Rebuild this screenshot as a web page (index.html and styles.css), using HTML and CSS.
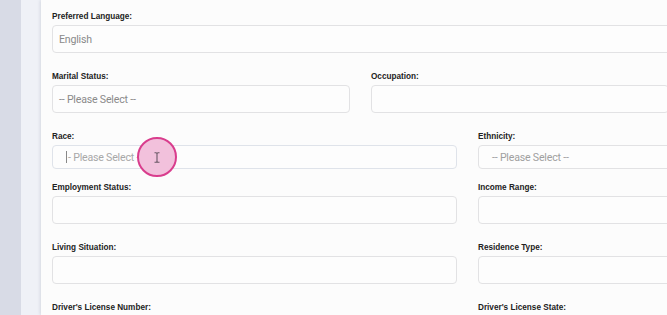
FILE: index.html
```html
<!DOCTYPE html>
<html>
<head>
<meta charset="utf-8">
<link rel="stylesheet" href="styles.css">
</head>
<body>
<div class="rail-dark"></div>
<div class="rail-light"></div>
<main class="card">
  <div class="row row-one">
    <div class="field">
      <label class="label">Preferred Language:</label>
      <div class="input">English</div>
    </div>
  </div>
  <div class="row row-half">
    <div class="field">
      <label class="label">Marital Status:</label>
      <div class="input">-- Please Select --</div>
    </div>
    <div class="field">
      <label class="label">Occupation:</label>
      <div class="input"></div>
    </div>
  </div>
  <div class="row row-wide row-short">
    <div class="field">
      <label class="label">Race:</label>
      <div class="input input-short input-focus"><span class="caret"></span>- Please Select -</div>
    </div>
    <div class="field">
      <label class="label">Ethnicity:</label>
      <div class="input input-short input-pad">-- Please Select --</div>
    </div>
  </div>
  <div class="row row-wide">
    <div class="field">
      <label class="label">Employment Status:</label>
      <div class="input"></div>
    </div>
    <div class="field">
      <label class="label">Income Range:</label>
      <div class="input"></div>
    </div>
  </div>
  <div class="row row-wide">
    <div class="field">
      <label class="label">Living Situation:</label>
      <div class="input"></div>
    </div>
    <div class="field">
      <label class="label">Residence Type:</label>
      <div class="input"></div>
    </div>
  </div>
  <div class="row row-wide">
    <div class="field">
      <label class="label">Driver's License Number:</label>
      <div class="input"></div>
    </div>
    <div class="field">
      <label class="label">Driver's License State:</label>
      <div class="input"></div>
    </div>
  </div>
  <div class="click-ring">
    <svg width="8" height="11" viewBox="0 0 8 11"><path d="M1.5 0.8h1.5q1 0 1 1v7.4q0 1 1 1h1.5M6.5 0.8h-1.5q-1 0-1 1M4 9.2q0 1-1 1h-1.5" fill="none" stroke="#6a5866" stroke-width="1.1"/></svg>
  </div>
</main>
</body>
</html>
```
FILE: styles.css
```css
* { box-sizing: border-box; }
html, body { margin: 0; padding: 0; }
body {
  width: 667px;
  height: 315px;
  overflow: hidden;
  display: flex;
  background: #fcfcfc;
  font-family: "Liberation Sans", Arial, sans-serif;
}
.rail-dark { width: 21px; flex: none; background: #d8dbe6; }
.rail-light { width: 20px; flex: none; background: #eff1f7; }
.card {
  position: relative;
  flex: none;
  width: 626px;
  height: 315px;
  overflow: hidden;
  background: #fcfcfc;
  box-shadow: -1px 0 3px rgba(60, 70, 100, 0.14);
  padding: 11px 0 0 11px;
  display: flex;
  flex-direction: column;
  gap: 18px;
}
.row { display: flex; gap: 21px; flex: none; }
.row-one .field { width: 700px; }
.row-half .field { width: 298px; }
.row-wide .field { width: 405px; }
.row-short { margin-bottom: -5px; }
.field { display: flex; flex-direction: column; gap: 3px; flex: none; }
.label {
  font-size: 8.2px;
  line-height: 11px;
  font-weight: bold;
  color: #222;
}
.input {
  height: 28px;
  border: 1px solid #e2e2e4;
  border-radius: 4px;
  background: #fdfdfd;
  font-family: Roboto, "Liberation Sans", sans-serif;
  font-size: 10.6px;
  letter-spacing: -0.2px;
  color: #8a8a8a;
  padding: 0 6px;
  display: flex;
  align-items: center;
}
.input-short { height: 24px; }
.input-focus { border-color: #dfe3ea; padding-left: 13px; color: #a8a8a8; }
.input-pad { padding-left: 13px; color: #a0a0a0; }
.caret {
  display: inline-block;
  width: 1px;
  height: 12px;
  background: #888;
  margin-right: 1px;
}
.click-ring {
  position: absolute;
  left: 96px;
  top: 137px;
  width: 40px;
  height: 40px;
  border-radius: 50%;
  background: #f2c1dc;
  border: 2px solid #d93d8d;
  display: flex;
  align-items: center;
  justify-content: center;
}
```
